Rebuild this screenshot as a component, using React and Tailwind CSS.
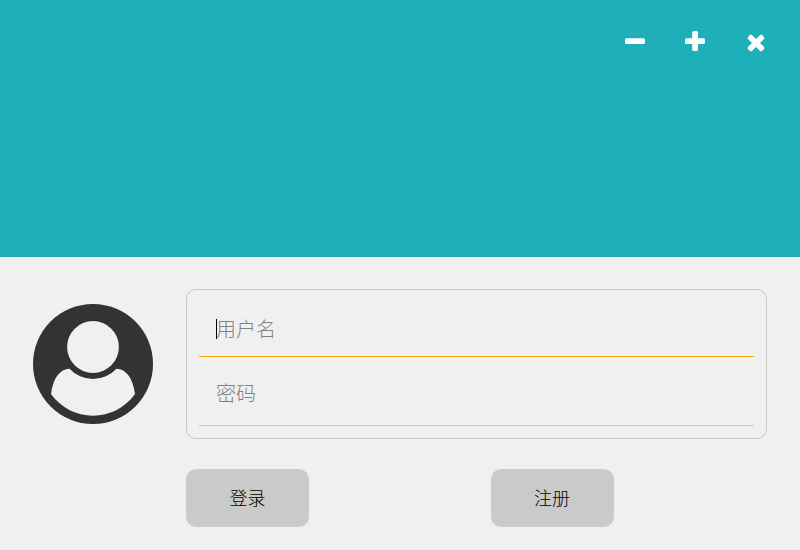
const cjk = "font-['Noto_Sans_CJK_SC',sans-serif]";

function WindowControls() {
  return (
    <div className="flex justify-end pt-[31px] pr-[35px] text-white">
      <button aria-label="minimize" className="mr-10 h-5 w-5">
        <svg viewBox="0 0 20 20" className="block h-5 w-5" fill="currentColor">
          <rect x="0" y="7.2" width="20" height="5.8" rx="1.6" />
        </svg>
      </button>
      <button aria-label="maximize" className="mr-[42px] h-5 w-5">
        <svg viewBox="0 0 20 20" className="block h-5 w-5" fill="currentColor">
          <rect x="0" y="7.2" width="20" height="5.8" rx="1.6" />
          <rect x="7.2" y="0" width="5.8" height="20" rx="1.6" />
        </svg>
      </button>
      <button aria-label="close" className="h-6 w-[18px]">
        <svg viewBox="0 0 18 24" className="block h-6 w-[18px]" fill="currentColor">
          <g transform="translate(9 12) rotate(45)">
            <rect x="-10" y="-2.8" width="20" height="5.6" rx="1.8" />
            <rect x="-2.8" y="-10" width="5.6" height="20" rx="1.8" />
          </g>
        </svg>
      </button>
    </div>
  );
}

function Avatar() {
  return (
    <svg viewBox="0 0 120 120" className="mt-[15px] ml-[33px] block h-[120px] w-[120px] shrink-0">
      <circle cx="60" cy="60" r="60" fill="#333333" />
      <circle cx="60" cy="43" r="25.9" fill="#f0f0f0" />
      <path
        d="M18 90C20 74 27 65 36.5 64.7A32 32 0 0 0 83.5 64.7C93 65 100 74 102 90A51.4 51.4 0 0 1 18 90Z"
        fill="#f0f0f0"
      />
    </svg>
  );
}

export default function App() {
  return (
    <div className={`flex h-[550px] w-[800px] flex-col overflow-hidden bg-[#f0f0f0] ${cjk}`}>
      <header className="h-[257px] shrink-0 bg-[#1eafb9]">
        <WindowControls />
      </header>
      <main className="flex pt-8">
        <Avatar />
        <div className="ml-[33px] w-[581px]">
          <div className="h-[150px] rounded-[10px] border border-[#c8c8c8] px-3">
            <div className="flex h-[67px] items-center border-b border-[#ffaa00] pt-3 pl-[17px]">
              <span className="h-5 w-px bg-black" />
              <span className="-ml-px text-[20px] leading-5 font-light text-[#808080]">用户名</span>
            </div>
            <div className="flex h-[69px] items-center border-b border-[#c8c8c8] pt-1 pl-[17px]">
              <span className="text-[20px] leading-5 font-light text-[#808080]">密码</span>
            </div>
          </div>
          <div className="mt-[30px] flex gap-[182px]">
            <button className="h-[58px] w-[123px] rounded-[10px] bg-[#cacaca] pb-[3px] text-[18px] leading-5 font-light text-black">
              登录
            </button>
            <button className="h-[58px] w-[123px] rounded-[10px] bg-[#cacaca] pr-px pb-[3px] text-[18px] leading-5 font-light text-black">
              注册
            </button>
          </div>
        </div>
      </main>
    </div>
  );
}
